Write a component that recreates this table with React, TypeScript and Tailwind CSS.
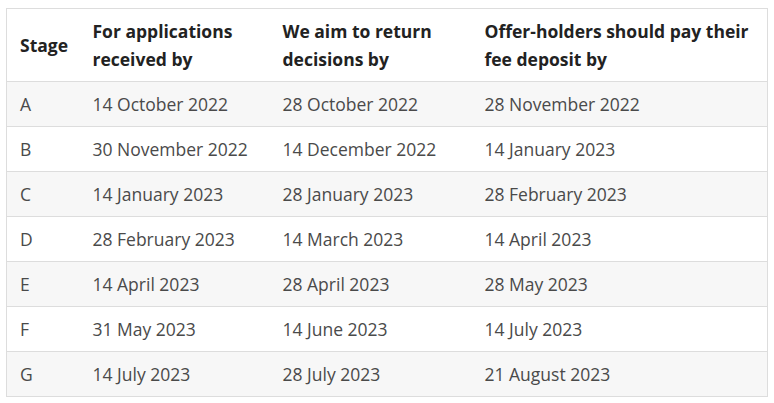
const rows = [
  ["A", "14 October 2022", "28 October 2022", "28 November 2022"],
  ["B", "30 November 2022", "14 December 2022", "14 January 2023"],
  ["C", "14 January 2023", "28 January 2023", "28 February 2023"],
  ["D", "28 February 2023", "14 March 2023", "14 April 2023"],
  ["E", "14 April 2023", "28 April 2023", "28 May 2023"],
  ["F", "31 May 2023", "14 June 2023", "14 July 2023"],
  ["G", "14 July 2023", "28 July 2023", "21 August 2023"],
];

export default function App() {
  return (
    <div className="bg-white w-[774px] h-[403px] pl-[6px] pt-[8px] font-['Open_Sans',sans-serif]">
      <table className="border-collapse border border-[#dddddd] table-fixed w-[762px]">
        <colgroup>
          <col className="w-[73px]" />
          <col className="w-[190px]" />
          <col className="w-[202px]" />
          <col />
        </colgroup>
        <thead>
          <tr className="h-[73px]">
            {["Stage", "For applications received by", "We aim to return decisions by", "Offer-holders should pay their fee deposit by"].map((h) => (
              <th key={h} className="text-left align-middle px-[13px] text-[17.5px] leading-[28px] font-bold text-[#222222]">
                {h}
              </th>
            ))}
          </tr>
        </thead>
        <tbody>
          {rows.map((r, i) => (
            <tr key={r[0]} className={`h-[45px] border-t border-[#dddddd] ${i % 2 === 0 ? "bg-[#f7f7f7]" : "bg-white"}`}>
              {r.map((c, j) => (
                <td key={j} className="px-[13px] text-[17.5px] text-[#4a4a4a] align-middle">
                  {c}
                </td>
              ))}
            </tr>
          ))}
        </tbody>
      </table>
    </div>
  );
}
